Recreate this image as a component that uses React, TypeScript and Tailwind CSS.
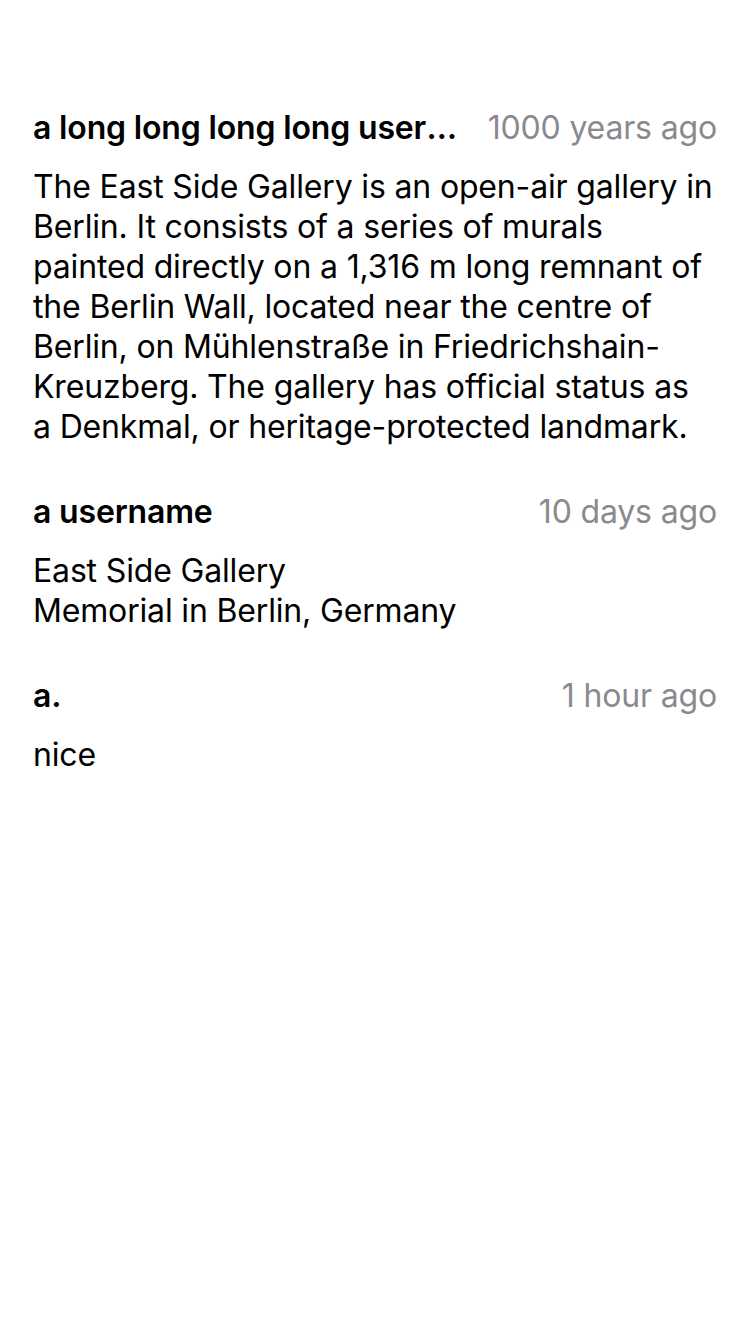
type Comment = {
  id: number;
  username: string;
  time: string;
  body: string;
};

// line breaks follow the wrap of the original layout
const comments: Comment[] = [
  {
    id: 1,
    username: 'a long long long long username',
    time: '1000 years ago',
    body: [
      'The East Side Gallery is an open-air gallery in',
      'Berlin. It consists of a series of murals',
      'painted directly on a 1,316 m long remnant of',
      'the Berlin Wall, located near the centre of',
      'Berlin, on Mühlenstraße in Friedrichshain-',
      'Kreuzberg. The gallery has official status as',
      'a Denkmal, or heritage-protected landmark.'
    ].join('\n')
  },
  {
    id: 2,
    username: 'a username',
    time: '10 days ago',
    body: 'East Side Gallery\nMemorial in Berlin, Germany'
  },
  {
    id: 3,
    username: 'a.',
    time: '1 hour ago',
    body: 'nice'
  }
];

export default function App() {
  return (
    <div className="min-h-[1334px] w-[750px] bg-white px-[33px] pt-[108px] font-['Inter','Noto_Sans',sans-serif] text-[32px] leading-[40px] tracking-[-0.005em] text-black">
      <div className="flex flex-col gap-[45px]">
        {comments.map((comment) => (
          <div key={comment.id} className="flex flex-col gap-[19px]">
            <div className="flex items-center gap-[22px]">
              <span className="min-w-0 flex-1 truncate font-semibold">{comment.username}</span>
              <span className="shrink-0 text-[#8a8a8e]">{comment.time}</span>
            </div>
            <p className="whitespace-pre-line">{comment.body}</p>
          </div>
        ))}
      </div>
    </div>
  );
}
